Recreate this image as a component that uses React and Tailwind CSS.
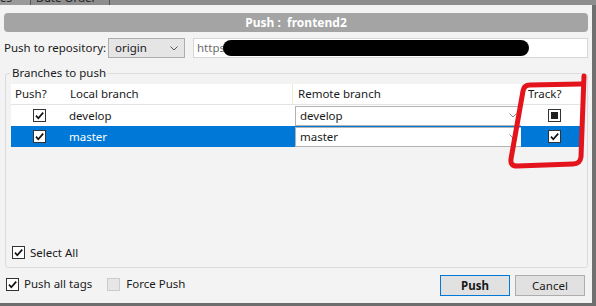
import React from 'react';

// little windows-ish check box
const Box = ({ state, disabled }) => {
  if (disabled) {
    return <span className="inline-block w-[13px] h-[13px] border border-[#cccccc] bg-[#e6e6e6] shrink-0"></span>;
  }
  return (
    <span className="flex items-center justify-center w-[13px] h-[13px] border border-[#333333] bg-white shrink-0">
      {state === 'checked' && (
        <svg width="11" height="11" viewBox="0 0 11 11">
          <path d="M2 5.6 L4.3 8.2 L9.2 2.6" fill="none" stroke="#111" strokeWidth="1.7" />
        </svg>
      )}
      {state === 'mixed' && <span className="w-[7px] h-[7px] bg-[#1f1f1f]"></span>}
    </span>
  );
};

const Chevron = ({ color = '#555' }) => (
  <svg width="8" height="5" viewBox="0 0 8 5">
    <path d="M0.5 0.5 L4 4 L7.5 0.5" fill="none" stroke={color} strokeWidth="1" />
  </svg>
);

const rows = [
  { local: 'develop', remote: 'develop', track: 'mixed', selected: false },
  { local: 'master', remote: 'master', track: 'checked', selected: true },
];

const App = () => {
  return (
    <div
      className="relative w-[596px] h-[306px] overflow-hidden bg-[#f3f3f3] text-[11.5px] text-[#1a1a1a] whitespace-nowrap"
      style={{ fontFamily: '"Noto Sans", "Open Sans", sans-serif' }}
    >
      {/* tab strip behind the dialog */}
      <div className="h-[5px] bg-[#8e8e8e] overflow-hidden">
        <div className="flex -mt-[9px] text-[#222] leading-[14px]">
          <span className="w-[30px] bg-[#9a9a9a]">es</span>
          <span className="w-[1px] bg-[#555]"></span>
          <span className="w-[78px] pl-[5px] flex items-center justify-between pr-[4px]">
            Date Order <Chevron color="#444" />
          </span>
          <span className="w-[1px] bg-[#555]"></span>
        </div>
      </div>

      <div className="flex">
        <div className="w-[592px] h-[298px] px-[4px]">
          {/* title */}
          <div className="mt-[8px] h-[19px] rounded-[4px] bg-[#a4a4a4] text-white font-bold flex items-center justify-center text-[12px]">
            Push :&nbsp; frontend2
          </div>

          {/* repository */}
          <div className="mt-[6px] h-[20px] flex items-center">
            <span className="w-[104px]">Push to repository:</span>
            <div className="w-[77px] h-[20px] border border-[#adadad] bg-[#e5e5e5] flex items-center justify-between pl-[6px] pr-[6px]">
              <span>origin</span>
              <Chevron />
            </div>
            <div className="ml-[8px] flex-1 h-[20px] border border-[#d6d6d6] bg-white flex items-center pl-[3px] overflow-hidden">
              <span className="text-[#6d6d6d]">https</span>
              <span className="-ml-[2px] w-[306px] h-[16px] rounded-full bg-black"></span>
            </div>
          </div>

          {/* group box */}
          <div className="relative mt-[15px] ml-[1px] w-[583px] h-[195px] border border-[#dcdcdc] rounded-[3px] pt-[10px] pl-[5px] pr-[4px]">
            <span className="absolute -top-[9px] left-[4px] px-[2px] bg-[#f3f3f3] leading-[16px]">Branches to push</span>

            <div className="w-[572px]">
              <div className="h-[21px] bg-white flex items-center border-b border-[#e3e3e3]">
                <span className="w-[56px] pl-[4px]">Push?</span>
                <span className="w-[226px] pl-[3px] border-r border-[#f0ead0] h-full flex items-center">Local branch</span>
                <span className="w-[230px] pl-[5px] border-r border-[#f0ead0] h-full flex items-center">Remote branch</span>
                <span className="w-[60px] pl-[5px]">Track?</span>
              </div>
              {rows.map((r) => (
                <div
                  key={r.local}
                  className={`h-[21px] flex items-center ${r.selected ? 'bg-[#0078d7] text-white' : 'bg-white'}`}
                >
                  <span className="w-[56px] flex justify-center pl-[1px]">
                    <Box state="checked" />
                  </span>
                  <span className="w-[228px] pl-[2px]">{r.local}</span>
                  <span className="w-[226px] h-[20px] bg-white text-[#1a1a1a] border border-r-0 border-[#b3b3b3] flex items-center justify-between pl-[4px] pr-[4px]">
                    {r.remote}
                    <Chevron color="#888" />
                  </span>
                  <span className="w-[62px] flex justify-center pl-[4px]">
                    <Box state={r.track} />
                  </span>
                </div>
              ))}
            </div>

            <div className="mt-[97px] flex items-center gap-[5px] pl-[1px]">
              <Box state="checked" />
              <span>Select All</span>
            </div>
          </div>

          {/* bottom row */}
          <div className="mt-[7px] flex items-center">
            <div className="ml-[2px] -mt-[3px] flex items-center gap-[5px]">
              <Box state="checked" />
              <span>Push all tags</span>
            </div>
            <div className="ml-[15px] -mt-[3px] flex items-center gap-[6px]">
              <Box disabled />
              <span>Force Push</span>
            </div>
            <div className="ml-auto mr-[3px] flex gap-[5px]">
              <button className="w-[70px] h-[21px] bg-[#e1e1e1] border border-[#0078d7] font-bold">Push</button>
              <button className="w-[70px] h-[21px] bg-[#e1e1e1] border border-[#adadad]">Cancel</button>
            </div>
          </div>
        </div>
        <div className="w-[4px] h-[298px] bg-[#707070]"></div>
      </div>
      <div className="h-[3px] bg-[#6e6e6e]"></div>

      {/* red hand-drawn highlight */}
      <svg className="absolute left-0 top-0 pointer-events-none" width="596" height="306">
        <path
          d="M584 76 L581 157 Q580 164 573 164 L517 166 Q510 166 511 159 L523 91 Q524 85 530 85 L581 84"
          fill="none"
          stroke="#e3141c"
          strokeWidth="5"
          strokeLinecap="round"
          strokeLinejoin="round"
        />
      </svg>
    </div>
  );
};

export default App;
